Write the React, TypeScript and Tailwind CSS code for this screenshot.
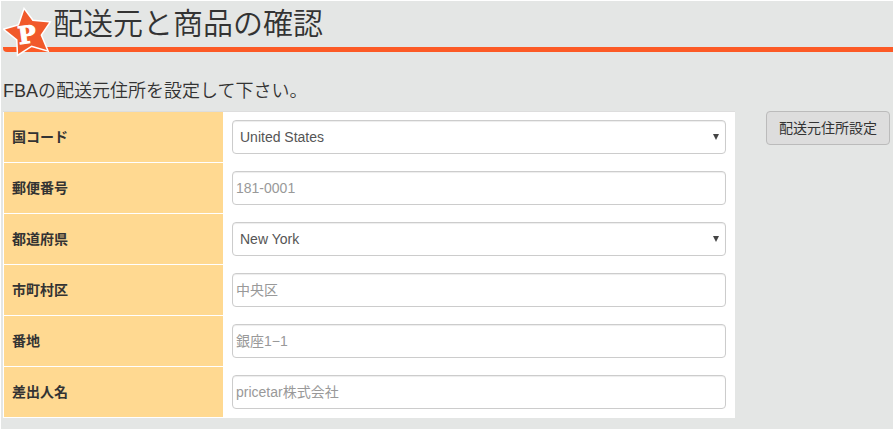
import React from 'react';

interface Field {
  id: string;
  label: string;
  placeholder?: string;
  options?: string[];
}

const fields: Field[] = [
  { id: 'country', label: '国コード', options: ['United States', 'Japan'] },
  { id: 'postal', label: '郵便番号', placeholder: '181-0001' },
  { id: 'state', label: '都道府県', options: ['New York', 'California'] },
  { id: 'city', label: '市町村区', placeholder: '中央区' },
  { id: 'address', label: '番地', placeholder: '銀座1−1' },
  { id: 'sender', label: '差出人名', placeholder: 'pricetar株式会社' },
];

const controlClass =
  'block h-[34px] w-full rounded border border-[#ccc] bg-white text-sm text-[#555] shadow-[inset_0_1px_1px_rgba(0,0,0,0.075)] outline-none';

const StarLogo: React.FC = () => (
  <svg width="52" height="52" viewBox="0 0 52 52" aria-hidden="true">
    <path
      d="M21.3 3 L29.5 14 L46 15.5 L37.5 28 L43.8 43 L28.5 38.5 L15.2 47 L14.5 32.5 L2 22.5 L16 18.5 Z"
      fill="#f1592a"
      stroke="#fff"
      strokeWidth="3"
      strokeLinejoin="miter"
      paintOrder="stroke"
    />
    <text
      x="15"
      y="36"
      transform="rotate(-8 25 27)"
      fill="#fff"
      stroke="#fff"
      strokeWidth="1"
      fontFamily="DejaVu Serif, serif"
      fontWeight="bold"
      fontSize="24"
    >
      P
    </text>
  </svg>
);

const FieldControl: React.FC<{ field: Field }> = ({ field }) => {
  if (!field.options) {
    return (
      <input
        id={field.id}
        type="text"
        placeholder={field.placeholder}
        className={`${controlClass} px-[3px] placeholder:text-[#999]`}
      />
    );
  }

  return (
    <div className="relative">
      <select id={field.id} className={`${controlClass} appearance-none px-[7px]`}>
        {field.options.map((option) => (
          <option key={option}>{option}</option>
        ))}
      </select>
      <svg width="6" height="6" viewBox="0 0 6 6" className="pointer-events-none absolute top-[14px] right-[7px]" aria-hidden="true">
        <path d="M0 0 H6 L3 6 Z" fill="#444" />
      </svg>
    </div>
  );
};

export default function App() {
  return (
    <div className="min-h-screen border border-white bg-[#e4e6e5] font-['Liberation_Sans','Noto_Sans_CJK_JP',sans-serif] text-sm text-[#333]">
      {/* Page title */}
      <header className="relative ml-[2px] h-[51px] pl-[50px]">
        <h1 className="h-[46px] font-['Noto_Sans_CJK_JP',sans-serif] text-[30px] leading-10 font-[350]">配送元と商品の確認</h1>
        <div className="-ml-[50px] h-[5px] rounded-bl bg-[#fc5a26]" />
        <div className="absolute top-[6px] left-0">
          <StarLogo />
        </div>
      </header>

      <main className="pt-7 pr-[3px] pl-[2px]">
        <h2 className="text-lg leading-[22px] font-[350]">FBAの配送元住所を設定して下さい。</h2>

        <div className="mt-[9px] flex items-start gap-[31px]">
          {/* Shipping address */}
          <div className="min-w-0 flex-1">
            <table className="w-full table-fixed border-separate border-spacing-0 border-t border-t-[#ddd] bg-white">
              <tbody>
                {fields.map((field) => (
                  <tr key={field.id}>
                    <th className="w-[221px] border-r border-b border-l border-white bg-[#ffd991] bg-clip-padding px-2 text-left font-bold">
                      <label htmlFor={field.id}>{field.label}</label>
                    </th>
                    <td className="pt-2 pr-[9px] pb-[9px] pl-2">
                      <FieldControl field={field} />
                    </td>
                  </tr>
                ))}
              </tbody>
            </table>
          </div>

          <button type="button" className="h-[34px] rounded border border-[#bbb] bg-[#ddd] px-3 text-sm">
            配送元住所設定
          </button>
        </div>
      </main>
    </div>
  );
}
